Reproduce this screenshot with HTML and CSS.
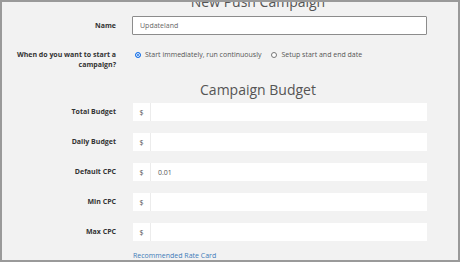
FILE: index.html
```html
<!DOCTYPE html>
<html lang="en">
<head>
  <meta charset="UTF-8" />
  <meta name="viewport" content="width=device-width, initial-scale=1" />
  <title>New Push Campaign</title>
  <link rel="stylesheet" href="styles.css">
</head>
<body>

  <div class="frame">
    <h2 class="section-title first">New Push Campaign</h2>

    <form class="campaign-form">
      <div class="form-row name-row">
        <label for="name">Name</label>
        <input type="text" id="name" class="text-input" value="Updateland" />
      </div>

      <div class="form-row start-row">
        <label>When do you want to start a campaign?</label>
        <div class="radio-group">
          <label class="radio"><span class="dot checked"></span>Start immediately, run continuously</label>
          <label class="radio"><span class="dot"></span>Setup start and end date</label>
        </div>
      </div>

      <h2 class="section-title">Campaign Budget</h2>

      <div class="form-row money-row">
        <label>Total Budget</label>
        <div class="input-group"><span class="addon">$</span><span class="value"></span></div>
      </div>
      <div class="form-row money-row">
        <label>Daily Budget</label>
        <div class="input-group"><span class="addon">$</span><span class="value"></span></div>
      </div>
      <div class="form-row money-row">
        <label>Default CPC</label>
        <div class="input-group"><span class="addon">$</span><span class="value">0.01</span></div>
      </div>
      <div class="form-row money-row">
        <label>Min CPC</label>
        <div class="input-group"><span class="addon">$</span><span class="value"></span></div>
      </div>
      <div class="form-row money-row">
        <label>Max CPC</label>
        <div class="input-group"><span class="addon">$</span><span class="value"></span></div>
      </div>

      <div class="form-row link-row">
        <span></span>
        <a href="#" class="rate-link">Recommended Rate Card</a>
      </div>
    </form>
  </div>

</body>
</html>
```

FILE: styles.css
```css
body {
  margin: 0;
  padding: 0;
  font-family: 'Open Sans', 'Noto Sans', sans-serif;
  background: #f2f2f2;
}

.frame {
  width: 460px;
  height: 262px;
  box-sizing: border-box;
  border: 2px solid #9a9a9a;
  background: #f2f2f2;
  overflow: hidden;
}

.section-title {
  margin: 0;
  padding-left: 56px;
  text-align: center;
  font-size: 14px;
  font-weight: 400;
  color: #555;
  line-height: 18px;
}

.section-title.first {
  margin-top: -9px;
}

.campaign-form {
  display: flex;
  flex-direction: column;
}

.form-row {
  display: grid;
  grid-template-columns: 114px 295px;
  column-gap: 16px;
  align-items: center;
}

.form-row > label {
  text-align: right;
  font-size: 7px;
  font-weight: 700;
  color: #333;
  line-height: 10px;
}

.name-row {
  margin-top: 5px;
}

.text-input {
  box-sizing: border-box;
  height: 19px;
  margin: 0;
  padding: 0 7px;
  border: 1px solid #8c8c8c;
  border-radius: 1px;
  background: #fff;
  font-family: inherit;
  font-size: 7px;
  color: #666;
}

.start-row {
  margin-top: 15px;
  align-items: start;
}

.radio-group {
  display: flex;
  gap: 10px;
  padding-left: 3px;
  line-height: 10px;
}

.radio {
  display: flex;
  align-items: center;
  gap: 4px;
  font-size: 7px;
  color: #555;
}

.dot {
  box-sizing: border-box;
  width: 6px;
  height: 6px;
  border-radius: 50%;
  border: 1px solid #777;
  background: #fff;
}

.dot.checked {
  border-color: #1a73e8;
  background: #1a73e8;
  box-shadow: inset 0 0 0 1px #fff;
}

.start-row + .section-title {
  margin-top: 11px;
}

.money-row {
  margin-top: 12px;
}

.section-title + .money-row {
  margin-top: 4px;
}

.input-group {
  display: flex;
  height: 18px;
  margin-left: 1px;
  background: #fff;
  font-size: 7px;
  color: #555;
}

.addon {
  width: 17px;
  display: flex;
  align-items: center;
  justify-content: center;
  border-right: 1px solid #ececec;
}

.value {
  flex: 1;
  display: flex;
  align-items: center;
  padding-left: 7px;
}

.link-row {
  margin-top: 10px;
}

.rate-link {
  margin-left: 1px;
  font-size: 7px;
  line-height: 10px;
  color: #3d7bb8;
  text-decoration: none;
}
```
